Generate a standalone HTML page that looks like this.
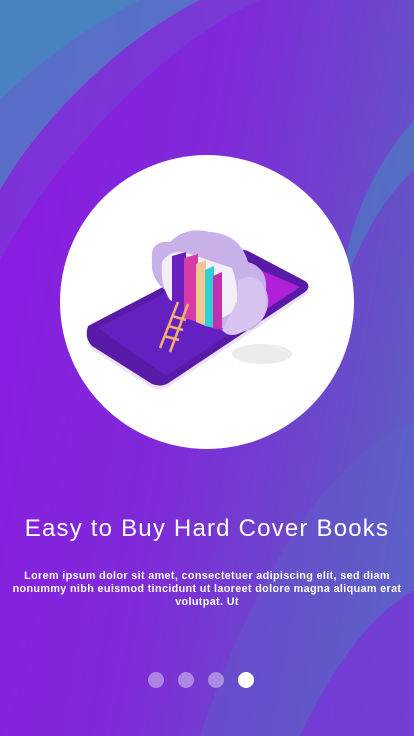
<!DOCTYPE html>
<html><head><meta charset="utf-8"><style>
html,body{margin:0;padding:0}
body{width:414px;height:736px;overflow:hidden;position:relative;font-family:"Liberation Sans",sans-serif;
background:linear-gradient(100deg,#8c1ae3 0%,#7f2ad8 45%,#6650c8 80%,#5a68c4 100%);}
.bg{position:absolute;left:0;top:0}
.circle{position:absolute;left:60px;top:155px;width:294px;height:294px;border-radius:50%;background:#fff}
h1{position:absolute;top:515px;left:0;width:414px;margin:0;text-align:center;color:#fff;font-weight:normal;font-size:24px;letter-spacing:1.2px;white-space:nowrap}
p{position:absolute;top:570px;left:4px;width:406px;margin:0;text-align:center;color:#fff;font-weight:bold;font-size:10.8px;letter-spacing:0.35px;line-height:13.2px}
.dot{position:absolute;top:672px;width:16px;height:16px;border-radius:50%;background:rgba(255,255,255,0.4)}
</style></head><body>
<svg class="bg" width="414" height="736" viewBox="0 0 414 736">
<path d="M0 0 L200 0 C120 40 40 120 0 190 Z" fill="#4a8ac0" opacity="0.75"/>
<path d="M0 0 L140 0 C80 30 30 70 0 100 Z" fill="#3f90bd" opacity="0.6"/>
<path d="M0 190 C40 120 120 40 200 0 L260 0 C170 40 60 150 0 260 Z" fill="#6a5acb" opacity="0.35"/>
<path d="M414 120 C370 170 345 230 340 300 C350 260 380 200 414 170 Z" fill="#4a82c2" opacity="0.6"/>
<path d="M200 736 C260 560 330 460 414 420 L414 736 Z" fill="#5c62cb" opacity="0.4"/>
<path d="M300 736 C340 650 380 610 414 590 L414 736 Z" fill="#7c30d8" opacity="0.7"/>
</svg>
<div class="circle"></div>
<svg class="bg" width="414" height="736" viewBox="0 0 414 736">
<ellipse cx="262" cy="354" rx="30" ry="10" fill="#e4e4e4" opacity="0.7"/>
<path d="M88 330 L232 255 Q240 252 248 255 L305 285 Q312 290 305 296 L170 386 Q162 392 152 388 L92 350 Q84 342 88 330 Z" fill="#ece4f4"/>
<path d="M88 326 L232 251 Q240 248 248 251 L305 281 Q312 286 305 292 L170 382 Q162 388 152 384 L92 346 Q84 338 88 326 Z" fill="#5a1aa8"/>
<path d="M98 328 L232 258 L300 287 L166 376 Z" fill="#6420c0"/>
<path d="M232 258 L300 287 L262 312 L200 276 Z" fill="#b020d8"/>
<path d="M152 260 Q150 240 170 242 Q186 226 210 232 Q240 234 248 262 Q268 268 266 290 Q272 305 262 320 Q250 338 222 328 Q190 316 165 290 Q150 278 152 260 Z" fill="#c8b0e8"/>
<path d="M162 262 Q170 250 184 252 L232 268 Q240 290 236 310 Q220 320 212 322 L170 300 Q160 285 162 262 Z" fill="#f4eefa"/>
<path d="M172 256 L186 252 L186 318 L172 312 Z" fill="#6a20c0"/>
<path d="M184 258 L198 254 L198 322 L184 318 Z" fill="#d83aa8"/>
<path d="M196 264 L206 260 L206 326 L196 322 Z" fill="#f2c890"/>
<path d="M205 270 L214 266 L214 328 L205 326 Z" fill="#30d0d8"/>
<path d="M213 276 L222 272 L222 330 L213 328 Z" fill="#c030b0"/>
<path d="M238 280 Q262 270 266 295 Q270 320 246 330 Q230 340 222 330 L238 300 Z" fill="#d8c4f0"/>
<g stroke="#f0b070" stroke-width="2.5" fill="none"><path d="M178 302 L160 348 M188 304 L170 352"/><path d="M168 326 L183 330 M164 336 L179 340 M172 316 L186 320"/></g>
</svg>
<h1>Easy to Buy Hard Cover Books</h1>
<p>Lorem ipsum dolor sit amet, consectetuer adipiscing elit, sed diam<br>nonummy nibh euismod tincidunt ut laoreet dolore magna aliquam erat<br>volutpat. Ut</p>
<div class="dot" style="left:148px"></div>
<div class="dot" style="left:178px"></div>
<div class="dot" style="left:208px"></div>
<div class="dot" style="left:238px;background:#fff"></div>
</body></html>
